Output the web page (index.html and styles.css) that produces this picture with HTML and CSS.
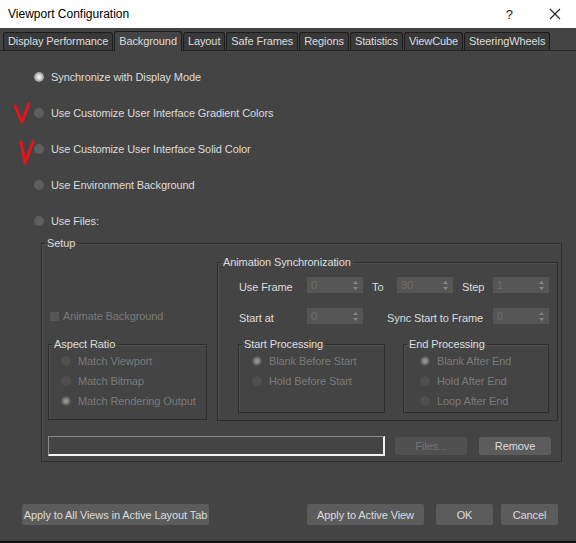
FILE: index.html
```html
<!DOCTYPE html>
<html lang="en">
<head>
    <meta charset="UTF-8">
    <title>Viewport Configuration</title>
    <link rel="stylesheet" href="styles.css">
</head>
<body>
    <div class="titlebar">
        <span class="title">Viewport Configuration</span>
        <span class="help">?</span>
        <svg class="close" width="12" height="12" viewBox="0 0 12 12">
            <path d="M1 1 L11 11 M11 1 L1 11" stroke="#222" stroke-width="1.1" fill="none"/>
        </svg>
    </div>

    <div class="tabs">
        <div class="tab">Display Performance</div>
        <div class="tab active">Background</div>
        <div class="tab">Layout</div>
        <div class="tab">Safe Frames</div>
        <div class="tab">Regions</div>
        <div class="tab">Statistics</div>
        <div class="tab">ViewCube</div>
        <div class="tab">SteeringWheels</div>
    </div>

    <div class="options">
        <label class="option"><span class="radio on"></span>Synchronize with Display Mode</label>
        <label class="option"><span class="radio"></span>Use Customize User Interface Gradient Colors</label>
        <label class="option"><span class="radio"></span>Use Customize User Interface Solid Color</label>
        <label class="option"><span class="radio"></span>Use Environment Background</label>
        <label class="option"><span class="radio"></span>Use Files:</label>
        <svg class="marks" width="40" height="120" viewBox="0 0 40 120">
            <path d="M15 55 L22 71 L29 53" stroke="#e3141c" stroke-width="3" fill="none" stroke-linecap="round" stroke-linejoin="round"/>
            <path d="M21 91 L25 112 L33 91" stroke="#e3141c" stroke-width="3" fill="none" stroke-linecap="round" stroke-linejoin="round"/>
        </svg>
    </div>

    <fieldset class="group setup">
        <legend>Setup</legend>
        <div class="setup-body">
            <div class="setup-left">
                <label class="check disabled"><span class="checkbox"></span>Animate Background</label>
                <fieldset class="group aspect">
                    <legend>Aspect Ratio</legend>
                    <div class="group-body">
                        <label class="option small disabled"><span class="radio"></span>Match Viewport</label>
                        <label class="option small disabled"><span class="radio"></span>Match Bitmap</label>
                        <label class="option small disabled"><span class="radio on"></span>Match Rendering Output</label>
                    </div>
                </fieldset>
            </div>

            <fieldset class="group anim">
                <legend>Animation Synchronization</legend>
                <div class="anim-body">
                    <div class="frames">
                        <span class="lbl">Use Frame</span>
                        <div class="spinner"><span>0</span><svg width="5" height="9" viewBox="0 0 5 9"><path d="M2.5 0 L5 3 L0 3 Z M0 6 L5 6 L2.5 9 Z" fill="#858585"/></svg></div>
                        <span class="lbl to">To</span>
                        <div class="spinner"><span>30</span><svg width="5" height="9" viewBox="0 0 5 9"><path d="M2.5 0 L5 3 L0 3 Z M0 6 L5 6 L2.5 9 Z" fill="#858585"/></svg></div>
                        <span class="lbl to">Step</span>
                        <div class="spinner"><span>1</span><svg width="5" height="9" viewBox="0 0 5 9"><path d="M2.5 0 L5 3 L0 3 Z M0 6 L5 6 L2.5 9 Z" fill="#858585"/></svg></div>

                        <span class="lbl">Start at</span>
                        <div class="spinner"><span>0</span><svg width="5" height="9" viewBox="0 0 5 9"><path d="M2.5 0 L5 3 L0 3 Z M0 6 L5 6 L2.5 9 Z" fill="#858585"/></svg></div>
                        <span class="lbl sync">Sync Start to Frame</span>
                        <div class="spinner"><span>0</span><svg width="5" height="9" viewBox="0 0 5 9"><path d="M2.5 0 L5 3 L0 3 Z M0 6 L5 6 L2.5 9 Z" fill="#858585"/></svg></div>
                    </div>
                    <div class="processing">
                        <fieldset class="group proc start">
                            <legend>Start Processing</legend>
                            <div class="group-body">
                                <label class="option small disabled"><span class="radio on"></span>Blank Before Start</label>
                                <label class="option small disabled"><span class="radio"></span>Hold Before Start</label>
                            </div>
                        </fieldset>
                        <fieldset class="group proc end">
                            <legend>End Processing</legend>
                            <div class="group-body">
                                <label class="option small disabled"><span class="radio on"></span>Blank After End</label>
                                <label class="option small disabled"><span class="radio"></span>Hold After End</label>
                                <label class="option small disabled"><span class="radio"></span>Loop After End</label>
                            </div>
                        </fieldset>
                    </div>
                </div>
            </fieldset>

            <div class="file-row">
                <div class="path"></div>
                <button class="btn files" disabled>Files...</button>
                <button class="btn remove">Remove</button>
            </div>
        </div>
    </fieldset>

    <div class="footer">
        <button class="btn all">Apply to All Views in Active Layout Tab</button>
        <button class="btn active-view">Apply to Active View</button>
        <button class="btn ok">OK</button>
        <button class="btn cancel">Cancel</button>
    </div>

    <div class="strip"></div>
</body>
</html>
```

FILE: styles.css
```css
* {
    box-sizing: border-box;
}

body {
    margin: 0;
    width: 576px;
    height: 543px;
    overflow: hidden;
    background-color: #444444;
    color: #dcdcdc;
    font-family: "Liberation Sans", Arial, sans-serif;
    font-size: 11px;
    letter-spacing: -0.1px;
}

.titlebar {
    height: 28px;
    background-color: #ffffff;
    color: #000000;
    display: flex;
    align-items: center;
    padding-left: 8px;
    font-size: 12px;
    letter-spacing: 0;
}

.title {
    flex: 1;
}

.help {
    font-size: 13px;
    color: #222;
    margin-right: 36px;
}

.close {
    margin-right: 15px;
}

/* tabs */

.tabs {
    display: flex;
    align-items: flex-end;
    height: 23px;
    padding-left: 3px;
    border-bottom: 1px solid #262626;
}

.tab {
    flex: none;
    white-space: nowrap;
    height: 18px;
    line-height: 17px;
    padding: 0 4px;
    margin-right: 1px;
    background-color: #393939;
    border: 1px solid #1c1c1c;
    border-bottom: none;
    border-radius: 3px 3px 0 0;
    font-size: 11px;
    color: #dddddd;
}

.tab.active {
    height: 20px;
    line-height: 19px;
    margin-bottom: -1px;
    background-color: #444444;
}

/* main options */

.options {
    position: relative;
    display: flex;
    flex-direction: column;
    gap: 18px;
    padding: 17px 0 0 34px;
}

.option {
    display: flex;
    align-items: center;
    height: 18px;
    white-space: nowrap;
}

.option.small {
    height: 20px;
}

.radio {
    width: 10px;
    height: 10px;
    border-radius: 50%;
    background-color: #5e5e5e;
    margin-right: 7px;
    flex: none;
}

.radio.on {
    background: radial-gradient(circle, #f4f4f4 0, #e0e0e0 2px, #b4b4b4 3.5px, #9a9a9a 5px);
}

.disabled {
    color: #7a7a7a;
}

.disabled .radio {
    background-color: #4f4f4f;
}

.disabled .radio.on {
    background: radial-gradient(circle, #9a9a9a 0, #8a8a8a 2px, #666 3.5px, #555 5px);
}

.marks {
    position: absolute;
    left: 0;
    top: 0;
}

/* group boxes */

.group {
    margin: 0;
    padding: 0;
    border: 1px solid #2e2e2e;
    box-shadow: inset 1px 1px 0 #4f4f4f;
    min-width: 0;
}

.group legend {
    padding: 0 2px;
    margin-left: 3px;
    line-height: 14px;
    font-size: 11px;
    color: #dddddd;
}

.setup {
    margin: 6px 0 0 41px;
    width: 521px;
}

.setup-body {
    display: grid;
    grid-template-columns: 159px 341px;
    column-gap: 10px;
    row-gap: 15px;
    padding: 5px 0 5px 6px;
}

.setup-left {
    display: flex;
    flex-direction: column;
}

.check {
    display: flex;
    align-items: center;
    height: 10px;
    margin: 56px 0 0 2px;
}

.checkbox {
    width: 9px;
    height: 9px;
    background-color: #555555;
    margin-right: 4px;
}

.aspect {
    margin-top: 16px;
    height: 83px;
}

.aspect .group-body {
    padding-left: 12px;
}

/* animation synchronization */

.anim-body {
    padding: 0 0 7px 20px;
}

.frames {
    display: grid;
    grid-template-columns: 69px 56px 34px 56px 40px 56px;
    grid-auto-rows: 16px;
    row-gap: 15px;
    margin-top: 8px;
    align-items: center;
}

.lbl {
    padding-left: 1px;
    padding-top: 4px;
    white-space: nowrap;
}

.lbl.to {
    padding-left: 9px;
}

.lbl.sync {
    grid-column: span 3;
    text-align: right;
    padding-right: 10px;
}

.spinner {
    height: 16px;
    background-color: #565656;
    color: #6f6f6f;
    display: flex;
    align-items: center;
    justify-content: space-between;
    padding: 0 5px 0 4px;
}

.processing {
    display: flex;
    gap: 18px;
    margin-top: 13px;
}

.proc {
    height: 76px;
}

.proc.start {
    width: 147px;
}

.proc.start .group-body {
    padding-left: 13px;
}

.proc.end {
    width: 146px;
}

.proc.end .group-body {
    padding-left: 16px;
}

/* file row */

.file-row {
    grid-column: span 2;
    display: flex;
    align-items: center;
    height: 20px;
}

.path {
    width: 337px;
    height: 20px;
    border: 1px solid #8a8a8a;
    border-right: 2px solid #f2f2f2;
    border-bottom: 2px solid #f2f2f2;
}

.btn {
    height: 21px;
    padding: 0;
    border: none;
    border-radius: 2px;
    background-color: #5c5c5c;
    color: #dddddd;
    font-family: "Liberation Sans", Arial, sans-serif;
    font-size: 11px;
    letter-spacing: -0.1px;
    white-space: nowrap;
}

.files {
    width: 72px;
    height: 18px;
    margin-left: 10px;
    background-color: #505050;
    color: #747474;
}

.remove {
    width: 72px;
    height: 18px;
    margin-left: 12px;
}

/* footer */

.footer {
    display: flex;
    margin-top: 42px;
    padding-left: 22px;
}

.all {
    width: 187px;
}

.active-view {
    width: 117px;
    margin-left: 98px;
}

.ok {
    width: 57px;
    margin-left: 12px;
}

.cancel {
    width: 57px;
    margin-left: 8px;
}

.strip {
    height: 3px;
    margin-top: 16px;
    background-color: #111111;
}
```
